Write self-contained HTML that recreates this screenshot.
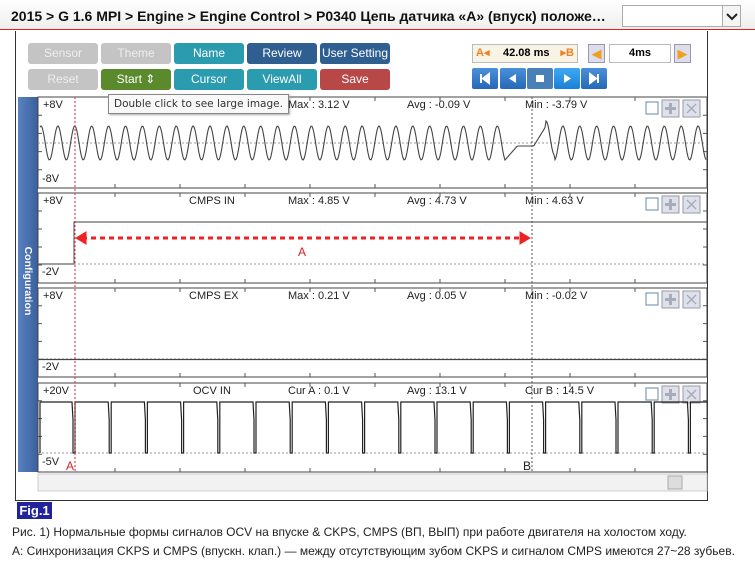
<!DOCTYPE html>
<html><head><meta charset="utf-8"><style>
*{margin:0;padding:0;box-sizing:border-box}
body{width:755px;height:564px;background:#fff;font-family:"Liberation Sans",Arial,sans-serif;position:relative;overflow:hidden}
.title{position:absolute;left:0;top:0;width:755px;height:30px;background:linear-gradient(#fff,#eee);border-bottom:1px solid #d22}
.title span{position:absolute;left:11px;top:8px;font-size:14px;font-weight:bold;color:#111;white-space:nowrap}
.sel{position:absolute;left:622px;top:5px;width:119px;height:22px;border:1px solid #aaa;background:#fff}
.sel b{position:absolute;right:0;top:0;width:18px;height:20px;border-left:1px solid #aaa;background:#f4f4f4}
.frame{position:absolute;left:15px;top:31px;width:693px;height:470px;border:1px solid #333;border-top:none}
.btn{position:absolute;height:21px;border-radius:3px;color:#fff;font-size:12px;text-align:center;line-height:21px}
.g{background:#c4c4c4;color:#eee}.t{background:#2b9bb0}.n{background:#2f5e90}.gr{background:#5b8a2d}.r{background:#b84848}
.pb{position:absolute;top:68px;width:26px;height:21px;background:linear-gradient(#4a90d8,#2668b8);border-radius:2px}
.tip{position:absolute;left:108px;top:94px;width:181px;height:20px;border:1px solid #888;background:#f8f8f8;line-height:18px;padding-left:5px;color:#333;box-shadow:1px 1px 2px #aaa;font-family:"DejaVu Sans",sans-serif;font-size:10.5px;white-space:nowrap;overflow:hidden}
.cfg{position:absolute;left:18px;top:97px;width:20px;height:375px;background:linear-gradient(90deg,#5a82c0,#3a5f9c)}
.cfg span{position:absolute;left:-35px;top:178px;transform:rotate(90deg);color:#fff;font-weight:bold;font-size:10.5px;width:90px;text-align:center}
.lbl{position:absolute;font-size:11px;color:#222}
</style></head><body>
<div class="title"><span>2015 &gt; G 1.6 MPI &gt; Engine &gt; Engine Control &gt; P0340 Цепь датчика «A» (впуск) положе…</span></div>
<div class="sel"><b><svg width="18" height="20"><path d="M4 8l5 5 5-5" stroke="#222" stroke-width="2" fill="none"/></svg></b></div>
<div class="frame"></div>
<div class="btn g" style="left:28px;top:43px;width:70px">Sensor</div>
<div class="btn g" style="left:101px;top:43px;width:70px">Theme</div>
<div class="btn t" style="left:174px;top:43px;width:70px">Name</div>
<div class="btn n" style="left:247px;top:43px;width:70px">Review</div>
<div class="btn n" style="left:320px;top:43px;width:70px">User Setting</div>
<div class="btn g" style="left:28px;top:69px;width:70px">Reset</div>
<div class="btn gr" style="left:101px;top:69px;width:70px">Start ⇕</div>
<div class="btn t" style="left:174px;top:69px;width:70px">Cursor</div>
<div class="btn t" style="left:247px;top:69px;width:70px">ViewAll</div>
<div class="btn r" style="left:320px;top:69px;width:70px">Save</div>
<div style="position:absolute;left:472px;top:44px;width:106px;height:19px;border:1px solid #bbb;background:#f8f3e4;font-size:11px;font-weight:bold;line-height:17px"><span style="color:#f08020;position:absolute;left:3px">A◂</span><span style="position:absolute;left:30px">42.08 ms</span><span style="color:#f08020;position:absolute;right:3px">▸B</span></div>
<div style="position:absolute;left:588px;top:44px;width:17px;height:19px;border:1px solid #99a;background:#dde;color:#f0a020;font-size:13px;line-height:17px;text-align:center">◀</div>
<div style="position:absolute;left:609px;top:44px;width:62px;height:19px;border:1px solid #bbb;background:#fff;font-size:11px;font-weight:bold;line-height:17px;text-align:center">4ms</div>
<div style="position:absolute;left:674px;top:44px;width:17px;height:19px;border:1px solid #99a;background:#dde;color:#f0a020;font-size:13px;line-height:17px;text-align:center">▶</div>
<div class="pb" style="left:472px"><svg width="26" height="21"><path d="M9 6v9M17 6l-6 4.5 6 4.5z" stroke="#fff" fill="#fff" stroke-width="2"/></svg></div>
<div class="pb" style="left:500px"><svg width="26" height="21"><path d="M16 6l-7 4.5 7 4.5z" fill="#fff"/></svg></div>
<div class="pb" style="left:527px;background:#4a80b8"><svg width="26" height="21"><rect x="9" y="7" width="8" height="7" fill="#fff"/></svg></div>
<div class="pb" style="left:554px;background:linear-gradient(#40a8f0,#1a80d8)"><svg width="26" height="21"><path d="M10 6l7 4.5-7 4.5z" fill="#fff"/></svg></div>
<div class="pb" style="left:581px"><svg width="26" height="21"><path d="M17 6v9M9 6l6 4.5-6 4.5z" stroke="#fff" fill="#fff" stroke-width="2"/></svg></div>
<div class="cfg"><span>Configuration</span></div>
<svg id="s" style="position:absolute;left:0;top:0" width="755" height="564"></svg>
<div class="tip">Double click to see large image.</div>
<div class="lbl" style="left:43px;top:99px">+8V</div><div class="lbl" style="left:288px;top:99px">Max : 3.12 V</div><div class="lbl" style="left:407px;top:99px">Avg : -0.09 V</div><div class="lbl" style="left:525px;top:99px">Min : -3.79 V</div><div class="lbl" style="left:42px;top:173px">-8V</div>
<div class="lbl" style="left:43px;top:195px">+8V</div><div class="lbl" style="left:189px;top:195px">CMPS IN</div><div class="lbl" style="left:288px;top:195px">Max : 4.85 V</div><div class="lbl" style="left:407px;top:195px">Avg : 4.73 V</div><div class="lbl" style="left:525px;top:195px">Min : 4.63 V</div><div class="lbl" style="left:42px;top:266px">-2V</div>
<div class="lbl" style="left:43px;top:290px">+8V</div><div class="lbl" style="left:189px;top:290px">CMPS EX</div><div class="lbl" style="left:288px;top:290px">Max : 0.21 V</div><div class="lbl" style="left:407px;top:290px">Avg : 0.05 V</div><div class="lbl" style="left:525px;top:290px">Min : -0.02 V</div><div class="lbl" style="left:42px;top:361px">-2V</div>
<div class="lbl" style="left:43px;top:385px">+20V</div><div class="lbl" style="left:193px;top:385px">OCV IN</div><div class="lbl" style="left:288px;top:385px">Cur A : 0.1 V</div><div class="lbl" style="left:407px;top:385px">Avg : 13.1 V</div><div class="lbl" style="left:525px;top:385px">Cur B : 14.5 V</div><div class="lbl" style="left:42px;top:456px">-5V</div>
<div class="lbl" style="left:66px;top:459px;color:#d22;font-size:12px">A</div><div class="lbl" style="left:523px;top:459px;font-size:12px">B</div>
<div class="lbl" style="left:298px;top:245px;color:#d22;font-size:12px">A</div>
<div style="position:absolute;left:17px;top:502px;width:35px;height:17px;background:#22229a;color:#fff;font-weight:bold;font-size:13px;line-height:17px;text-align:center">Fig.1</div>
<div style="position:absolute;left:12px;top:523px;font-size:12px;color:#222;line-height:19px;white-space:nowrap">Рис. 1) Нормальные формы сигналов OCV на впуске &amp; CKPS, CMPS (ВП, ВЫП) при работе двигателя на холостом ходу.<br>A: Синхронизация CKPS и CMPS (впускн. клап.) — между отсутствующим зубом CKPS и сигналом CMPS имеются 27~28 зубьев.</div>
<script>
var s=document.getElementById('s'),h='';
function L(d,st,w,da,f){h+='<path d="'+d+'" stroke="'+st+'" stroke-width="'+(w||1)+'" fill="'+(f||'none')+'"'+(da?' stroke-dasharray="'+da+'"':'')+'/>';}
var P=[[97,188],[193,283],[288,377],[383,472]];
P.forEach(function(p,i){
 h+='<rect x="38" y="'+p[0]+'" width="669" height="'+(p[1]-p[0])+'" fill="#fff" stroke="#444"/>';
 for(var x=115;x<700;x+=65)L('M'+x+' '+p[0]+'v4M'+x+' '+p[1]+'v-4','#555');
 for(var k=1;k<5;k++){var y=p[0]+(p[1]-p[0])*k/5;L('M38 '+y+'h4M707 '+y+'h-4','#555');}
 var y0=[143,264,359,453][i];L('M38 '+y0+'H707','#999',1,'2,2');
 h+='<rect x="646" y="'+(p[0]+5)+'" width="12" height="12" fill="#fff" stroke="#68a"/>';
 h+='<rect x="662" y="'+(p[0]+3)+'" width="17" height="17" fill="#dde2ea" stroke="#99a"/><path d="M670.5 '+(p[0]+6)+'v11M665 '+(p[0]+11.5)+'h11" stroke="#aab" stroke-width="3"/>';
 h+='<rect x="683" y="'+(p[0]+3)+'" width="17" height="17" fill="#dde2ea" stroke="#99a"/><path d="M687 '+(p[0]+7)+'l9 9M696 '+(p[0]+7)+'l-9 9" stroke="#aab" stroke-width="1.5"/>';
});
var per=16.9;
var d='';for(var x=40;x<=706;x++){var y;if(x<505)y=143-17*Math.cos((x-41)/per*2*Math.PI);else if(x<546){var t=(x-505)/41;y=160-(t<0.3?t/0.3*14:14+ (t<0.7?0:(t-0.7)/0.3*20));y=Math.min(y,160);}else y=143-17*Math.cos((x-546)/per*2*Math.PI)-(x<555?5:0);d+=(d?' L':'M')+x+' '+y.toFixed(1);}L(d,'#444',1.1);
L('M38 264H74V222H707','#666',1.2);
L('M38 359.5H707','#444',1.2);
d='M40 453V402';for(var k=0;k<18;k++){var x=74+36.2*k;if(x>705)break;d+='H'+(x-2)+'L'+(x-1)+' 420V453H'+(x+1)+'V402';}d+='H707';L(d,'#222',1.2);
L('M75 97V472','#e22',1,'2,2');L('M532 97V472','#555',1,'2,2');
L('M82 238H522','#e22',3,'5,4');L('M76 238l10-6v12z','#e22',1,'',"#e22");L('M530 238l-10-6v12z','#e22',1,'',"#e22");
h+='<rect x="38" y="474" width="669" height="17" fill="#f2f2f2" stroke="#ccc"/><rect x="668" y="476" width="14" height="13" fill="#ddd" stroke="#aaa"/>';
s.innerHTML=h;
</script>
</body></html>
